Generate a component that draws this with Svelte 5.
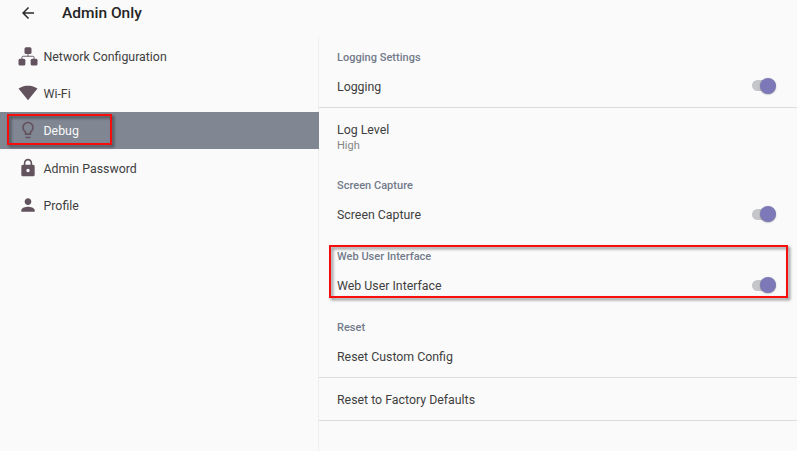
<script>
  const menu = [
    { id: "network", label: "Network Configuration" },
    { id: "wifi", label: "Wi-Fi" },
    { id: "debug", label: "Debug" },
    { id: "password", label: "Admin Password" },
    { id: "profile", label: "Profile" },
  ];

  let selected = $state("debug");

  let groups = $state([
    {
      title: "Logging Settings",
      rows: [
        { label: "Logging", on: true, divider: true },
        { label: "Log Level", value: "High" },
      ],
    },
    {
      title: "Screen Capture",
      rows: [{ label: "Screen Capture", on: true }],
    },
    {
      title: "Web User Interface",
      marked: true,
      rows: [{ label: "Web User Interface", on: true }],
    },
    {
      title: "Reset",
      rows: [
        { label: "Reset Custom Config", divider: true },
        { label: "Reset to Factory Defaults", divider: true },
      ],
    },
  ]);
</script>

{#snippet icon(id)}
  <svg class="icon" viewBox="0 0 24 24" fill="currentColor">
    {#if id === "network"}
      <rect x="7.8" y="1.4" width="8.4" height="8.2" rx="1.8" />
      <rect x="0.6" y="15.2" width="8.2" height="8.2" rx="1.8" />
      <rect x="15.2" y="15.2" width="8.2" height="8.2" rx="1.8" />
      <path
        d="M12 9.5V12.3M4.7 16V13.8Q4.7 12.3 6.2 12.3H17.8Q19.3 12.3 19.3 13.8V16"
        fill="none"
        stroke="currentColor"
        stroke-width="1.1"
      />
    {:else if id === "wifi"}
      <path d="M12 20.7L23.2 6.8C22.5 6.1 18.2 3.3 12 3.3S1.5 6.1 0.8 6.8Z" />
    {:else if id === "debug"}
      <path
        d="M9 21c0 .55.45 1 1 1h4c.55 0 1-.45 1-1v-1H9v1zm3-19C8.14 2 5 5.14 5 9c0 2.38 1.19 4.47 3 5.74V17c0 .55.45 1 1 1h6c.55 0 1-.45 1-1v-2.26c1.81-1.27 3-3.36 3-5.74 0-3.86-3.14-7-7-7zm2.85 11.1l-.85.6V16h-4v-2.3l-.85-.6C7.8 12.16 7 10.63 7 9c0-2.76 2.24-5 5-5s5 2.24 5 5c0 1.63-.8 3.16-2.15 4.1z"
      />
    {:else if id === "password"}
      <path
        d="M18 8h-1V6c0-2.76-2.24-5-5-5S7 3.24 7 6v2H6c-1.1 0-2 .9-2 2v10c0 1.1.9 2 2 2h12c1.1 0 2-.9 2-2V10c0-1.1-.9-2-2-2zm-6 9c-1.1 0-2-.9-2-2s.9-2 2-2 2 .9 2 2-.9 2-2 2zm3.1-9H8.9V6c0-1.71 1.39-3.1 3.1-3.1 1.71 0 3.1 1.39 3.1 3.1v2z"
      />
    {:else}
      <path
        d="M12 12c2.21 0 4-1.79 4-4s-1.79-4-4-4-4 1.79-4 4 1.79 4 4 4zm0 2c-2.67 0-8 1.34-8 4v2h16v-2c0-2.66-5.33-4-8-4z"
      />
    {/if}
  </svg>
{/snippet}

<div class="screen">
  <header>
    <svg class="back" viewBox="0 0 24 24">
      <path d="M20 11H7.83l5.59-5.59L12 4l-8 8 8 8 1.41-1.41L7.83 13H20v-2z" />
    </svg>
    <h1>Admin Only</h1>
  </header>

  <div class="body">
    <nav>
      {#each menu as item}
        <button
          class="item"
          class:selected={item.id === selected}
          onclick={() => (selected = item.id)}
        >
          {@render icon(item.id)}
          <span>{item.label}</span>
          {#if item.id === "debug"}
            <i class="marker marker-item"></i>
          {/if}
        </button>
      {/each}
    </nav>

    <main>
      {#each groups as group}
        <section>
          <h2>{group.title}</h2>
          {#each group.rows as row}
            <div class="row" class:divider={row.divider} class:tall={row.value}>
              <div class="text">
                <div class="label">{row.label}</div>
                {#if row.value}
                  <div class="value">{row.value}</div>
                {/if}
              </div>
              {#if row.on !== undefined}
                <button
                  class="switch"
                  class:on={row.on}
                  role="switch"
                  aria-checked={row.on}
                  aria-label={row.label}
                  onclick={() => (row.on = !row.on)}
                ></button>
              {/if}
            </div>
          {/each}
          {#if group.marked}
            <i class="marker marker-group"></i>
          {/if}
        </section>
      {/each}
    </main>
  </div>
</div>

<style>
  :global(body) {
    margin: 0;
    background: #fff;
  }

  .screen {
    width: 797px;
    height: 451px;
    display: flex;
    flex-direction: column;
    overflow: hidden;
    background: #fafafa;
    color: #3f3f3f;
    font-family: Roboto, "Liberation Sans", sans-serif;
    font-size: 12.35px;
  }

  header {
    height: 37px;
    display: flex;
    align-items: center;
    flex-shrink: 0;
    padding: 0 0 12px 19px;
    box-sizing: border-box;
  }

  .back {
    width: 18px;
    height: 18px;
    fill: #2a2a2a;
  }

  h1 {
    margin: 1px 0 0 25px;
    font-size: 15.5px;
    font-weight: 500;
    color: #252525;
  }

  .body {
    flex: 1;
    display: flex;
  }

  nav {
    width: 318px;
    border-right: 1px solid #efeff0;
  }

  .item {
    position: relative;
    width: 100%;
    height: 37.35px;
    display: flex;
    align-items: center;
    gap: 5.5px;
    padding: 0 0 0 18px;
    border: 0;
    background: none;
    color: inherit;
    font: inherit;
    text-align: left;
  }

  .item span {
    padding-top: 1.8px;
  }

  .item.selected {
    width: 318.5px;
    background: #808692;
    color: #fafafa;
  }

  .icon {
    width: 20px;
    height: 20px;
    color: #63535e;
  }

  main {
    flex: 1;
  }

  section {
    position: relative;
  }

  h2 {
    height: 28px;
    margin: 0;
    padding: 14px 0 0 18px;
    box-sizing: border-box;
    font-size: 11px;
    line-height: 14px;
    font-weight: 500;
    letter-spacing: 0.02px;
    color: #737a8b;
  }

  .row {
    height: 43px;
    display: flex;
    align-items: center;
    justify-content: space-between;
    padding: 0 21px 0 18px;
    box-sizing: border-box;
  }

  .row.divider {
    border-bottom: 1px solid #dcdcdc;
  }

  .row.tall {
    height: 57px;
  }

  .label {
    padding-top: 1px;
    line-height: 18px;
  }

  .tall .label {
    padding-top: 0;
  }

  .value {
    font-size: 11px;
    line-height: 14px;
    color: #858585;
  }

  .switch {
    position: relative;
    width: 24px;
    height: 11px;
    margin-bottom: 1px;
    padding: 0;
    border: 0;
    border-radius: 6px;
    background: #c5c6ca;
  }

  .switch::after {
    content: "";
    position: absolute;
    top: -2.5px;
    left: 0;
    width: 16px;
    height: 16px;
    border-radius: 50%;
    background: #f1f1f1;
    box-shadow: 0 0.5px 1.5px rgba(0, 0, 0, 0.35);
  }

  .switch.on::after {
    left: 8px;
    background: #7d79b8;
  }

  .marker {
    position: absolute;
    box-sizing: border-box;
    border: 2px solid #f80d0d;
    filter: drop-shadow(2px 2px 1.5px rgba(0, 0, 0, 0.5));
    pointer-events: none;
  }

  .marker-item {
    left: 7px;
    top: 2px;
    width: 105px;
    height: 31px;
  }

  .marker-group {
    left: 10px;
    right: 9px;
    top: 9px;
    height: 53px;
  }
</style>
